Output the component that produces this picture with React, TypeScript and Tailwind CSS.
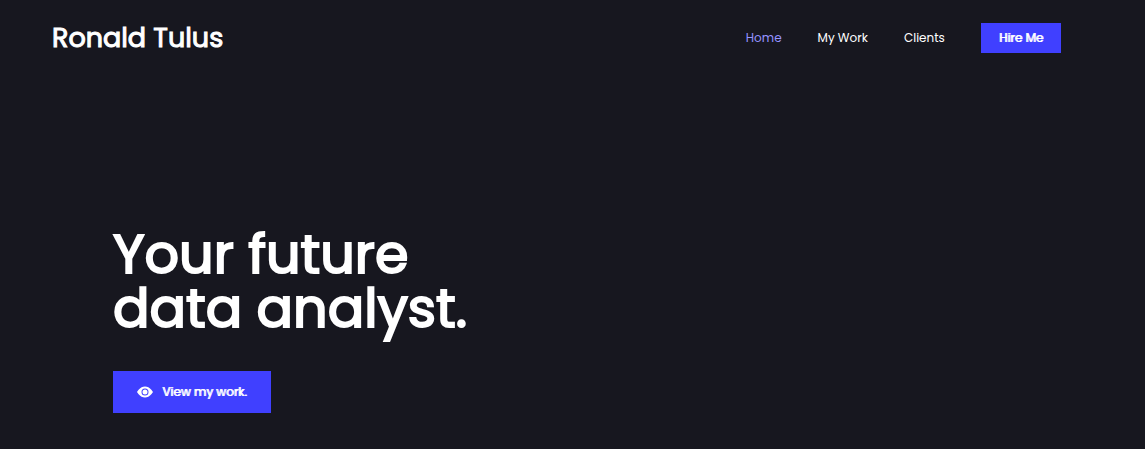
import { BsEyeFill } from "react-icons/bs";

const links = [
  { label: "Home", href: "#home", active: true },
  { label: "My Work", href: "#work", active: false },
  { label: "Clients", href: "#clients", active: false },
];

function Header() {
  return (
    <header className="flex items-center justify-between pt-4 pr-[84px] pl-[52px]">
      <a href="#home" className="text-[27px] leading-11 [-webkit-text-stroke:1px_currentColor]">
        Ronald Tulus
      </a>
      <nav className="flex items-center gap-9 text-xs">
        {links.map((link) => (
          <a key={link.label} href={link.href} className={link.active ? "text-[#9593ff]" : "text-white"}>
            {link.label}
          </a>
        ))}
        <a
          href="#hire"
          className="bg-[#4040ff] px-[18px] py-[5px] leading-5 [text-shadow:1px_0_#ffffff]"
        >
          Hire Me
        </a>
      </nav>
    </header>
  );
}

export default function App() {
  return (
    <div className="min-h-screen bg-[#17171f] font-['Poppins','Inter',sans-serif] text-white">
      <Header />
      <main className="px-[113px] pt-[167px] pb-9">
        <h1 className="text-[54px] leading-[54px] [-webkit-text-stroke:2px_currentColor]">
          Your future
          <br />
          data analyst.
        </h1>
        <a
          href="#work"
          className="mt-9 inline-flex h-[42px] items-center gap-[9px] bg-[#4040ff] px-6 text-xs [text-shadow:1px_0_#ffffff]"
        >
          <BsEyeFill className="size-4" aria-hidden="true" />
          View my work.
        </a>
      </main>
    </div>
  );
}
